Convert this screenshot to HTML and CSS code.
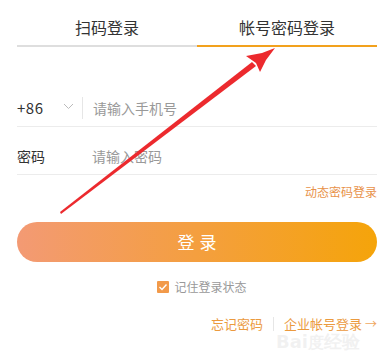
FILE: index.html
```html
<!DOCTYPE html>
<html lang="zh">
<head>
<meta charset="utf-8">
<link rel="stylesheet" href="styles.css">
</head>
<body>
<div class="page">
  <div class="tabs">
    <div class="tab">扫码登录</div>
    <div class="tab active">帐号密码登录</div>
  </div>
  <div class="row">
    <span class="code">+86</span>
    <svg class="chev" width="11" height="7" viewBox="0 0 11 7"><path d="M1 1 L5.5 5.5 L10 1" fill="none" stroke="#bbb" stroke-width="1"/></svg>
    <span class="vsep"></span>
    <span class="ph">请输入手机号</span>
  </div>
  <div class="row">
    <span class="label">密码</span>
    <span class="ph">请输入密码</span>
  </div>
  <div class="dyn"><span>动态密码登录</span></div>
  <div class="btn">登录</div>
  <div class="remember">
    <span class="cb"><svg width="12" height="12" viewBox="0 0 12 12"><path d="M2.5 6 L5 8.5 L9.5 3.5" fill="none" stroke="#fff" stroke-width="1.4"/></svg></span>
    <span>记住登录状态</span>
  </div>
  <div class="bottom">
    <span class="link">忘记密码</span>
    <span class="bsep"></span>
    <span class="link">企业帐号登录 <span class="arr">→</span></span>
  </div>
  <div class="wm">Bai<span class="paw">度</span>经验</div>
</div>
<svg class="arrow" width="384" height="353" viewBox="0 0 384 353">
  <polygon points="60,212 61,214 256,66 252,62" fill="#ec2a2e"/>
  <polygon points="275,48 262,53 246,56 256,63 260,72 266,60" fill="#ec2a2e"/>
</svg>
</body>
</html>
```
FILE: styles.css
```css
html, body {
  margin: 0;
  padding: 0;
  background: #fff;
}
body {
  width: 384px;
  height: 353px;
  overflow: hidden;
  position: relative;
  font-family: "Noto Sans CJK SC", "Noto Sans", sans-serif;
}
.page {
  width: 360px;
  margin-left: 17px;
  display: flex;
  flex-direction: column;
}
.tabs {
  display: flex;
}
.tab {
  flex: 1;
  height: 47px;
  box-sizing: border-box;
  padding-top: 15px;
  line-height: 24px;
  font-size: 16px;
  color: #333;
  text-align: center;
  border-bottom: 2px solid #dedede;
}
.tab.active {
  border-bottom-color: #f2a11d;
}
.row {
  display: flex;
  align-items: center;
  height: 48px;
  box-sizing: border-box;
  padding-top: 20px;
  padding-bottom: 10px;
  border-bottom: 1px solid #ececec;
  font-size: 14px;
  line-height: 18px;
}
.tabs + .row {
  margin-top: 32px;
}
.code {
  font-size: 15px;
  color: #333;
  width: 46px;
  letter-spacing: 0.5px;
}
.chev {
  margin-top: -2px;
}
.vsep {
  width: 1px;
  height: 22px;
  background: #e6e6e6;
  margin-left: 8px;
  margin-right: 10px;
}
.label {
  color: #333;
  width: 75px;
}
.ph {
  color: #999;
}
.dyn {
  display: flex;
  justify-content: flex-end;
  margin-top: 9px;
  font-size: 12px;
  line-height: 16px;
  color: #e8924a;
}
.btn {
  margin-top: 22px;
  height: 40px;
  border-radius: 20px;
  background: linear-gradient(to right, #f39a74, #f5a40a);
  color: #fff;
  font-size: 17px;
  line-height: 40px;
  text-align: center;
  letter-spacing: 5px;
  text-indent: 5px;
}
.remember {
  display: flex;
  align-items: center;
  justify-content: center;
  gap: 5px;
  margin-top: 18px;
  margin-left: 10px;
  font-size: 12px;
  line-height: 14px;
  color: #999;
}
.cb {
  width: 12px;
  height: 12px;
  background: #f29a4a;
  border-radius: 1px;
  display: flex;
}
.bottom {
  display: flex;
  justify-content: flex-end;
  align-items: center;
  margin-top: 22px;
  font-size: 13px;
  line-height: 16px;
  color: #eb9a3e;
}
.arr {
  color: #f0a860;
  font-size: 12px;
}
.bsep {
  width: 1px;
  height: 14px;
  background: #e6e6e6;
  margin: 0 10px;
}
.wm {
  position: absolute;
  left: 276px;
  top: 331px;
  font-family: "DejaVu Sans", sans-serif;
  font-size: 18px;
  line-height: 22px;
  color: rgba(200, 200, 200, 0.25);
  font-weight: bold;
}
.paw {
  font-size: 16px;
}
.arrow {
  position: absolute;
  left: 0;
  top: 0;
  pointer-events: none;
}
```
